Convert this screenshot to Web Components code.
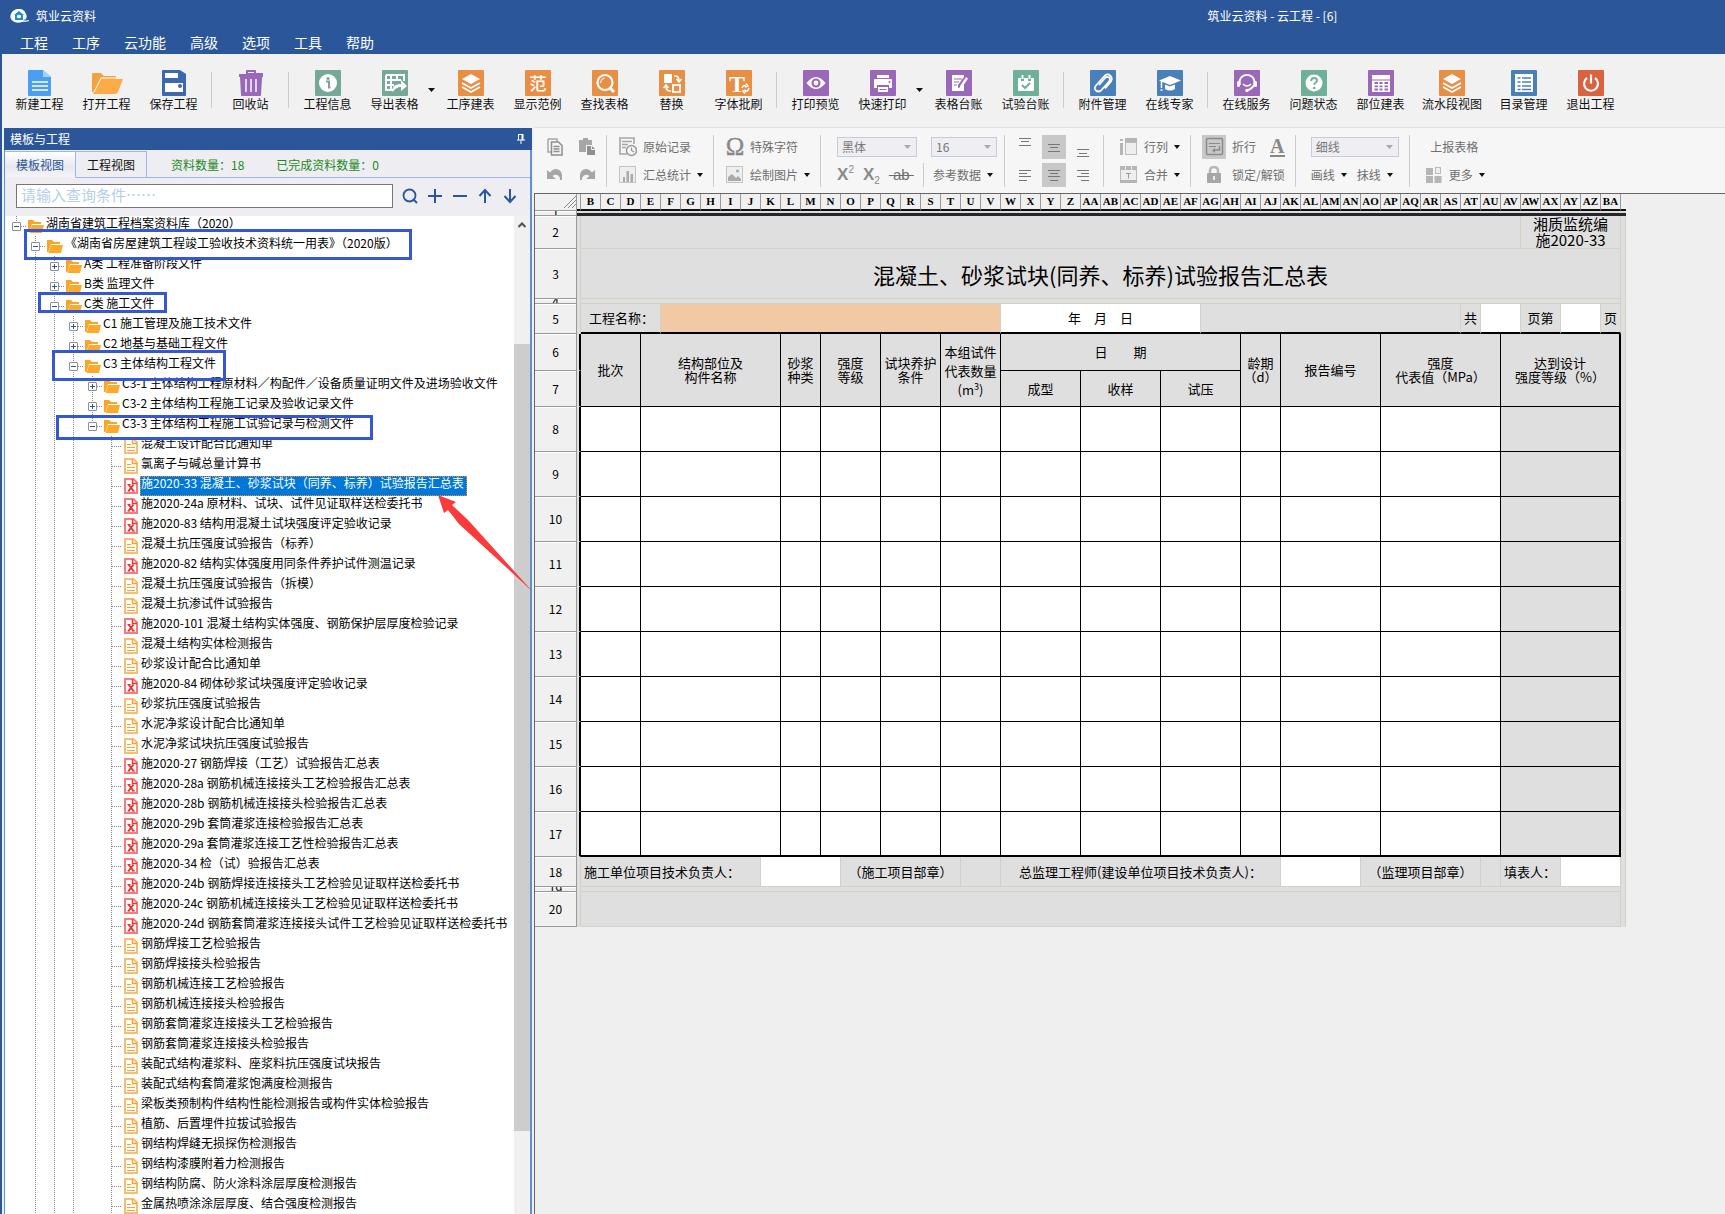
<!DOCTYPE html>
<html lang="zh-CN">
<head>
<meta charset="utf-8">
<title>筑业云资料</title>
<style>
  body {
    margin: 0;
    font-family: "Noto Sans CJK SC", sans-serif;
    font-size: 12px;
    line-height: 16px;
    color: #000;
    --blue: #2b579a;
  }
</style>
</head>
<body>
<app-window></app-window>

<script>
const define = (name, html, setup) => {
  const template = document.createElement("template");
  template.innerHTML = html;
  customElements.define(name, class extends HTMLElement {
    constructor() {
      super();
      this.attachShadow({ mode: "open" });
      this.shadowRoot.appendChild(template.content.cloneNode(true));
    }
    connectedCallback() {
      if (setup) setup(this, this.shadowRoot);
    }
  });
};

// ---------- icons ----------
const tile = (color, inner) => [26, 26, `<rect width="26" height="26" rx="1" fill="${color}"/>${inner}`];
const ORANGE = "#e78f45", GREEN = "#75a896", PURPLE = "#9a68b8", BLUE = "#4a80ba", TEAL = "#6fb198", GREY = "#a6a6a6";
const layers = `<path d="M13 4l9 5-9 5-9-5z" fill="#fff"/><path d="M4 13l9 5 9-5M4 17l9 5 9-5" fill="none" stroke="#fff" stroke-width="1.8"/>`;
const lines = (list) => `<path d="${list.map(([x, y, w]) => `M${x} ${y}h${w}`).join("")}" stroke="#777" shape-rendering="crispEdges"/>`;

const icons = {
  logo: [20, 16, `<path d="M9 1c4 0 6 2 7 5 1 2 1 4-1 6h4v1c-3 1-5 1-7 1-3 1-7 1-9-1C0 11 0 8 1 6c1-3 4-5 8-5z" fill="#fff"/><path d="M9 3l5 4h-1v5H5V7H4z" fill="#1b8fd0"/><rect x="7" y="7" width="4" height="3" rx="1" fill="#fff"/><path d="M14 11l5 2-6 .5z" fill="#6db7e6"/>`],
  file: [26, 26, `<path d="M1 1q0-1 1-1h14l8 7v18q0 1-1 1H2q-1 0-1-1z" fill="#4a9ff0"/><path d="M16 0v7h8z" fill="#a5d2fb"/><path d="M5 12h16M5 16h16M5 20h16" stroke="#fff" stroke-width="1.6"/>`],
  folder: [32, 26, `<path d="M1 22V4q0-1 1-1h8l3 3h11q1 0 1 1v2H10L3 22z" fill="#f3a23f"/><path d="M10 9h22l-5 13q-1 2-3 2H2z" fill="#fcab47"/><path d="M25 8H10L3 22" fill="none" stroke="#fff" stroke-width="1"/>`],
  save: [26, 26, `<path d="M1 1q0-1 1-1h17l6 4v21q0 1-1 1H2q-1 0-1-1z" fill="#3c68ac"/><rect x="4" y="3" width="13" height="5" fill="#fff"/><rect x="4" y="13" width="18" height="9" fill="#fff"/><circle cx="19" cy="16" r="2" fill="#3c68ac"/>`],
  trash: [26, 26, `<path d="M8 3V1q0-1 1-1h8q1 0 1 1v2h7v4h-1v1l-1 17q0 1-1 1H4q-1 0-1-1L2 7H1V4h7zM10 3h6V2h-6z" fill="${PURPLE}"/><path d="M8 9v13M13 9v13M18 9v13" stroke="#f1f1f1" stroke-width="1.6"/>`],
  info: tile(GREEN, `<circle cx="13" cy="13" r="9" fill="#fff"/><circle cx="13" cy="8.500" r="1.500" fill="${GREEN}"/><path d="M11 11.500h3v6h1.500" fill="none" stroke="${GREEN}" stroke-width="2"/>`),
  export: tile(GREEN, `<path d="M4 5h18v6M4 5v15h8M4 10h15M4 15h8M9 5v15M15 5v6" fill="none" stroke="#fff" stroke-width="2"/><path d="M10 22c0-6 4-8 9-8v-4l6 6-6 5v-4c-4 0-6 2-9 5z" fill="#fff"/>`),
  layers: tile(ORANGE, layers),
  sample: tile(ORANGE, `<text x="13" y="19.500" font-size="17" font-weight="500" text-anchor="middle" fill="#fff" font-family="Noto Sans CJK SC">范</text>`),
  find: tile(ORANGE, `<circle cx="13" cy="12.500" r="7.500" fill="none" stroke="#fff" stroke-width="2.200"/><path d="M18 18l4 4" stroke="#fff" stroke-width="3"/><path d="M8.500 13q0-4 4-5" fill="none" stroke="#fff"/>`),
  replace: tile(ORANGE, `<rect x="5" y="4" width="8" height="9" fill="#fff"/><rect x="14" y="15" width="7" height="7" fill="none" stroke="#fff" stroke-width="1.800"/><path d="M15 6h1q4 0 4 5M17.500 9l2.500 3 2.500-3M12 21h-1q-4 0-4-5M4.500 18L7 15l2.500 3" fill="none" stroke="#fff" stroke-width="1.600"/>`),
  font: tile(ORANGE, `<text x="11" y="22" font-size="24" font-weight="bold" text-anchor="middle" fill="#fff" font-family="Liberation Serif">T</text><path d="M16 18q1-3 4-2.500M20 13.500l2 2.500-3 1M23 18q-1 4-4 3.500M19 23.500L17 21l3-1" fill="none" stroke="#fff" stroke-width="1.400"/>`),
  eye: tile(PURPLE, `<path d="M3.500 13Q13 1 22.500 13 13 25 3.500 13z" fill="#fff"/><circle cx="13" cy="13" r="4.500" fill="${PURPLE}"/><circle cx="13" cy="13" r="2.400" fill="#fff"/>`),
  print: tile(PURPLE, `<rect x="7" y="5" width="12" height="3" fill="#fff"/><path d="M4 10q0-1 1-1h16q1 0 1 1v8h-3v-3H7v3H4z" fill="#fff"/><circle cx="19.500" cy="12" r="1" fill="${PURPLE}"/><path d="M8 17h10v5H8z" fill="#fff"/><path d="M9.500 19.500h7" stroke="${PURPLE}"/>`),
  ledger: tile(PURPLE, `<path d="M6 5h12v2l-6 8v3l3-1 3-4v8H6z" fill="#fff"/><path d="M8 9h8M8 12h5M8 15h3" stroke="${PURPLE}" stroke-width="1.200"/><path d="M14 16l6-9 2 1.500-6 9-2 1z" fill="#fff"/>`),
  trial: tile(TEAL, `<path d="M5 8h3v3h3V8h4v3h3V8h3v12q0 1-1 1H6q-1 0-1-1z" fill="#fff"/><path d="M9.500 5v4M16.500 5v4" stroke="#fff" stroke-width="2"/><path d="M9 15l3 3 5-5" fill="none" stroke="${TEAL}" stroke-width="2"/>`),
  clip: tile(BLUE, `<path d="M9 15l6-7q2-2 4-.5t0 4l-8 9q-2.500 2-5 0t0-5l8-9q3-3.500 6-1t1 6l-6 7" fill="none" stroke="#fff" stroke-width="1.700"/>`),
  expert: tile(BLUE, `<path d="M13 6l11 4.500L13 15 2 10.500z" fill="#fff"/><path d="M8 14.500l5 2 5-2V19q-5 3-10 0z" fill="#fff"/><path d="M4.500 11v7M3.500 20h2" stroke="#fff" stroke-width="1.500"/>`),
  service: tile(PURPLE, `<path d="M6 15a7.500 7.500 0 1 1 14 0q-2 4-6 5" fill="none" stroke="#fff" stroke-width="1.800"/><rect x="3" y="11" width="3" height="6" rx="1.500" fill="#fff"/><rect x="20" y="11" width="3" height="6" rx="1.500" fill="#fff"/><path d="M9 14q4 4 8 0" fill="none" stroke="#fff" stroke-width="1.600"/><circle cx="13" cy="20.500" r="1.700" fill="#fff"/>`),
  question: tile(TEAL, `<circle cx="13" cy="13" r="8.500" fill="#fff"/><path d="M10.200 11q0-3 3-3t2.800 2.600q0 1.400-1.600 2.200-1.200.6-1.200 2" fill="none" stroke="${TEAL}" stroke-width="2"/><circle cx="13.200" cy="18" r="1.300" fill="${TEAL}"/>`),
  grid: tile(PURPLE, `<rect x="4" y="5" width="18" height="17" fill="#fff"/><path d="M4 10h18" stroke="${PURPLE}"/><path d="M6.500 13h3.500M11.500 13h3M16.500 13h3.500M6.500 16.300h3.500M11.500 16.300h3M16.500 16.300h3.500M6.500 19.500h3.500M11.500 19.500h3M16.500 19.500h3.500" stroke="${PURPLE}" stroke-width="1.800"/>`),
  catalog: tile(BLUE, `<rect x="4" y="4" width="18" height="18" fill="#fff"/><path d="M6.500 8h3M6.500 12h3M6.500 16h3M11 8h9M11 12h9M11 16h9M11 19.500h9M6.500 19.500h3" stroke="${BLUE}" stroke-width="1.600"/>`),
  power: tile("#d96240", `<path d="M9 8a7 7 0 1 0 8 0" fill="none" stroke="#fff" stroke-width="2.200"/><path d="M13 4.500v9" stroke="#fff" stroke-width="2.200"/>`),
  caret: [7, 16, `<path d="M0 6h7L3.500 10z" fill="#111"/>`],
  caretgrey: [8, 16, `<path d="M0 6h7L3.500 10z" fill="#aaa"/>`],
  pin: [10, 12, `<path d="M2.500 1v6M1 7h8M5 7v4" stroke="#fff" fill="none"/><path d="M3 1.500h4" stroke="#fff"/><path d="M6.500 1v6" stroke="#fff" stroke-width="2"/>`],
  search: [16, 16, `<circle cx="7.500" cy="7.500" r="6" fill="none" stroke="#2b579a" stroke-width="1.800"/><path d="M11 11l4 4" stroke="#2b579a" stroke-width="2"/>`],
  plus: [16, 16, `<path d="M1 8h14M8 1v14" stroke="#2b579a" stroke-width="2"/>`],
  minus: [16, 16, `<path d="M1 8h14" stroke="#2b579a" stroke-width="2"/>`],
  up: [16, 16, `<path d="M8 2v13M2.500 8L8 2l5.500 6" fill="none" stroke="#2b579a" stroke-width="2"/>`],
  down: [16, 16, `<path d="M8 1v13M2.500 8L8 14l5.500-6" fill="none" stroke="#2b579a" stroke-width="2"/>`],
  scrollup: [16, 17, `<path d="M4.500 11L8 7.500l3.500 3.500" fill="none" stroke="#505050" stroke-width="2"/>`],
  dir: [16, 14, `<path d="M0 13V1h5l2 2h6v2H4L1.500 13z" fill="#fba426"/><path d="M4 5.500h11.500" stroke="#fff"/><path d="M4 6h12l-2 8H1.500z" fill="#ffa928"/>`],
  doc: [14, 16, `<path d="M1 1h8.500L13 4.500V15H1z" fill="#fff" stroke="#f6bd73" stroke-width="2"/><path d="M8.500 1v4.500H13" fill="none" stroke="#f9a52b" stroke-width="1.500"/><path d="M3 6.500h4M3 9.500h8M3 12.500h8" stroke="#f9a52b"/>`],
  xdoc: [14, 16, `<path d="M1 1h8.500L13 4.500V15H1z" fill="#fff" stroke="#f47c7c" stroke-width="2"/><path d="M8.500 1v4.500H13" fill="none" stroke="#ee3838" stroke-width="1.500"/><path d="M4.500 6.500l5 6.500M9.500 6.500l-5 6.500" stroke="#ee2a2a" stroke-width="1.800"/><path d="M3.500 6.500h3M8 13h3M3.500 13h2.500" stroke="#ee2a2a"/>`],
  copy: [18, 18, `<path d="M2 1h9v3M2 1v13h3" fill="none" stroke="${GREY}" stroke-width="1.500"/><path d="M5.500 4h7l3.500 3.500V17H5.500z" fill="#f6f6f6" stroke="#8f8f8f" stroke-width="1.500"/><path d="M7.500 8.500h6M7.500 11h6M7.500 13.500h6" stroke="#8f8f8f" stroke-width="1.300"/>`],
  paste: [18, 18, `<path d="M1 2h4V0h5v2h4v5H8v7H1z" fill="${GREY}"/><path d="M9 8h5l3 3v6H9z" fill="#8f8f8f"/><path d="M13.500 8v3.500H17" fill="none" stroke="#eee"/>`],
  undo: [18, 18, `<path d="M1 4v9h9l-3.500-3q4-3 7 1 .5 1 .5 3h2Q17 3 10 3 6.500 3 4 6.500z" fill="${GREY}"/>`],
  redo: [18, 18, `<path d="M17 4v9H8l3.500-3q-4-3-7 1-.5 1-.5 3H2Q1 3 8 3q3.500 0 6 3.500z" fill="${GREY}"/>`],
  record: [18, 20, `<path d="M8 17H1V1h14v6" fill="none" stroke="${GREY}" stroke-width="1.600"/><path d="M3 4.500h10M3 7.500h6M3 10.500h4" stroke="${GREY}" stroke-width="1.300"/><circle cx="12.500" cy="13.500" r="5" fill="#f6f6f6" stroke="#999" stroke-width="1.500"/><path d="M12.500 10.500v3l2.500 1.500" fill="none" stroke="#999" stroke-width="1.300"/>`],
  chart: [18, 18, `<rect x=".5" y=".5" width="16" height="16" fill="#eee" stroke="#c4c4c4"/><path d="M4 16v-5h2v5M7.500 16V5h2.500v11M11.500 16V8H14v8" fill="#aaa"/>`],
  omega: [18, 22, `<text x="9" y="19" font-size="25" text-anchor="middle" fill="#888" stroke="#888" stroke-width=".4" font-family="Liberation Serif">Ω</text>`],
  picture: [18, 18, `<rect x=".5" y=".5" width="16" height="16" fill="#eee" stroke="#c4c4c4"/><path d="M2 15v-4l4-3 4 4 2-2 3 3v2z" fill="#aaa"/><circle cx="11.500" cy="5" r="1.600" fill="#aaa"/>`],
  vtop: [24, 24, lines([[6, 3.5, 12], [8, 6.5, 8], [6, 10.5, 12]])],
  vmid: [24, 24, lines([[6, 9.5, 12], [8, 12.5, 8], [6, 16.5, 12]])],
  vbot: [24, 24, lines([[6, 14.5, 12], [8, 18.5, 8], [6, 21.5, 12]])],
  left: [24, 24, lines([[6, 7.5, 12], [6, 10.5, 8], [6, 13.5, 12], [6, 17.5, 8]])],
  center: [24, 24, lines([[6, 7.5, 12], [8, 10.5, 8], [6, 13.5, 12], [8, 17.5, 8]])],
  right: [24, 24, lines([[6, 7.5, 12], [10, 10.5, 8], [6, 13.5, 12], [10, 17.5, 8]])],
  rowcol: [18, 18, `<rect x="5.500" y="4.500" width="11" height="12" fill="#eee" stroke="#bbb"/><path d="M0 1h3v2H0zM5 0h12v4H5zM0 5h3v12H0z" fill="#b5b5b5"/>`],
  merge: [18, 18, `<rect x=".5" y=".5" width="16" height="16" fill="#eee" stroke="#bbb"/><path d="M0 0h17v4H0zM0 14h17v3H0z" fill="#b5b5b5"/><path d="M5.500 0v4M11.500 0v4" stroke="#eee"/><path d="M6 7.500h5M8.500 7.500v5" stroke="#999"/>`],
  wrap: [24, 24, `<rect x="4.500" y="3.500" width="16" height="16" rx="1" fill="none" stroke="#8a8a8a" stroke-width="1.500"/><path d="M7 8.500h11M7 11.500h7" stroke="#8a8a8a"/><path d="M17.500 11v4h-5" fill="none" stroke="#8a8a8a" stroke-width="1.500"/><path d="M10 15.500l3-2.500v5z" fill="#8a8a8a"/>`],
  lock: [24, 18, `<path d="M8 8V5q0-4 4-4t4 4v3" fill="none" stroke="#b8b8b8" stroke-width="2.500"/><rect x="5" y="7" width="14" height="10" rx="1" fill="${GREY}"/><path d="M12 10v4" stroke="#eee" stroke-width="2"/>`],
  more: [18, 18, `<path d="M1 2h7v7H1zM1 10h7v7H1zM9.500 10h7v7h-7z" fill="#b5b5b5"/><rect x="10.500" y="1.500" width="5" height="6" fill="#eee" stroke="#bbb"/>`],
};

define("ui-icon", `<style>:host { display: inline-flex; flex: none; } svg { display: block; }</style>`, (el, root) => {
  const [w, h, inner] = icons[el.getAttribute("name")];
  root.innerHTML += `<svg width="${w}" height="${h}" viewBox="0 0 ${w} ${h}" aria-hidden="true">${inner}</svg>`;
});

// ---------- title and menu ----------
define("title-bar", `
<style>
  :host { display: block; background: var(--blue); color: #fff; }
  .title { box-sizing: border-box; display: grid; grid-template-columns: 70% 1fr; height: 30px; padding-top: 2px; align-items: center; }
  .brand { display: flex; align-items: center; gap: 6px; padding-left: 10px; }
  nav { display: flex; gap: 24px; padding-left: 20px; height: 24px; }
  button { all: unset; font-size: 14px; line-height: 20px; cursor: default; }
</style>
<div class="title"><div class="brand"><ui-icon name="logo"></ui-icon><span>筑业云资料</span></div><span>筑业云资料 - 云工程 - [6]</span></div>
<nav>
  <button>工程</button><button>工序</button><button>云功能</button><button>高级</button><button>选项</button><button>工具</button><button>帮助</button>
</nav>`);

// ---------- main toolbar ----------
define("tool-button", `
<style>
  :host { display: block; flex: none; width: 67px; }
  :host([wide]) { width: 76px; }
  button { all: unset; box-sizing: border-box; width: 100%; display: flex; flex-direction: column; align-items: center; white-space: nowrap; color: #111; }
  button:hover { background: #dfe8f5; }
</style>
<button><slot name="icon"></slot><span><slot></slot></span></button>`);

define("main-toolbar", `
<style>
  :host { display: flex; align-items: flex-start; padding: 16px 0 15px 4px; background: #f1f1f1; }
  hr { flex: none; width: 1px; height: 36px; margin: 2px 5px 0 4px; border: 0; background: #ccc; }
  .drop { all: unset; width: 9px; flex: none; padding-top: 12px; }
</style>`, (el, root) => {
  const items = ["file 新建工程", "folder 打开工程", "save 保存工程", "|", "trash 回收站", "|", "info 工程信息", "export 导出表格", "v",
    "layers 工序建表", "sample 显示范例", "find 查找表格", "replace 替换", "font 字体批刷", "|", "eye 打印预览", "print 快速打印", "v",
    "ledger 表格台账", "trial 试验台账", "|", "clip 附件管理", "expert 在线专家", "|", "service 在线服务", "question 问题状态",
    "grid 部位建表", "layers 流水段视图", "catalog 目录管理", "power 退出工程"];
  root.innerHTML += items.map((item) => {
    if (item === "|") return "<hr>";
    if (item === "v") return `<button class="drop" aria-label="更多"><ui-icon name="caret"></ui-icon></button>`;
    const [icon, label] = item.split(" ");
    return `<tool-button${label.length > 4 ? " wide" : ""}><ui-icon slot="icon" name="${icon}"></ui-icon>${label}</tool-button>`;
  }).join("");
});

// ---------- tree ----------
define("tree-row", `
<style>
  :host { display: flex; height: 20px; padding-left: 2px; white-space: nowrap; }
  .cells { display: flex; flex: none; }
  i { flex: none; width: 19px; height: 20px; }
  .guide { background: repeating-linear-gradient(#888 0 1px, transparent 1px 2px) 9px 0 / 1px 100% no-repeat; }
  .node { display: grid; place-items: center; background:
      repeating-linear-gradient(#888 0 1px, transparent 1px 2px) 9px 0 / 1px 100% no-repeat,
      repeating-linear-gradient(90deg, #888 0 1px, transparent 1px 2px) 10px 10px / 10px 1px no-repeat; }
  .last { background-size: 1px 10px, 10px 1px; }
  button { box-sizing: border-box; width: 9px; height: 9px; padding: 0; border: 1px solid #8f8f8f; border-radius: 1px;
    background: linear-gradient(var(--blue), var(--blue)) center / 5px 1px no-repeat, #fff; }
  button.closed { background: linear-gradient(var(--blue), var(--blue)) center / 5px 1px no-repeat,
    linear-gradient(var(--blue), var(--blue)) center / 1px 5px no-repeat, #fff; }
  .icon { flex: none; width: 19px; display: grid; place-items: center; }
  .label { line-height: 14px; padding: 0 3px 0 1px; }
  :host([selected]) .label { background: #0078d7; color: #fff; outline: 1px dotted #f08a30; outline-offset: -1px; }
</style>
<span class="cells"></span><span class="label"><slot></slot></span>`, (el, root) => {
  const level = +el.getAttribute("level");
  const type = el.getAttribute("type");
  let cells = "";
  for (let i = 0; i < level; i++) {
    cells += `<i class="${i === 0 || i === 4 ? "" : "guide"}"></i>`;
  }
  const leaf = type === "doc" || type === "xdoc";
  const button = leaf ? "" : `<button class="${type}" aria-label="展开或折叠"></button>`;
  cells += `<i class="node${level === 0 || el.hasAttribute("last") ? " last" : ""}">${button}</i>`;
  cells += `<span class="icon"><ui-icon name="${leaf ? type : "dir"}"></ui-icon></span>`;
  root.querySelector(".cells").innerHTML = cells;
});

define("doc-tree", `
<style>:host { display: block; overflow: hidden; background: #fff; }</style>`, (el, root) => {
  const folders = [
    [0, "open", "湖南省建筑工程档案资料库（2020）"],
    [1, "open", "《湖南省房屋建筑工程竣工验收技术资料统一用表》（2020版）"],
    [2, "closed", "A类 工程准备阶段文件"],
    [2, "closed", "B类 监理文件"],
    [2, "open", "C类 施工文件"],
    [3, "closed", "C1 施工管理及施工技术文件"],
    [3, "closed", "C2 地基与基础工程文件"],
    [3, "open", "C3 主体结构工程文件"],
    [4, "closed", "C3-1 主体结构工程原材料／构配件／设备质量证明文件及进场验收文件"],
    [4, "closed", "C3-2 主体结构工程施工记录及验收记录文件"],
    [4, "open", "C3-3 主体结构工程施工试验记录与检测文件", "last"],
  ];
  const docs = `混凝土设计配合比通知单
氯离子与碱总量计算书
施2020-33 混凝土、砂浆试块（同养、标养）试验报告汇总表
施2020-24a 原材料、试块、试件见证取样送检委托书
施2020-83 结构用混凝土试块强度评定验收记录
混凝土抗压强度试验报告（标养）
施2020-82 结构实体强度用同条件养护试件测温记录
混凝土抗压强度试验报告（拆模）
混凝土抗渗试件试验报告
施2020-101 混凝土结构实体强度、钢筋保护层厚度检验记录
混凝土结构实体检测报告
砂浆设计配合比通知单
施2020-84 砌体砂浆试块强度评定验收记录
砂浆抗压强度试验报告
水泥净浆设计配合比通知单
水泥净浆试块抗压强度试验报告
施2020-27 钢筋焊接（工艺）试验报告汇总表
施2020-28a 钢筋机械连接接头工艺检验报告汇总表
施2020-28b 钢筋机械连接接头检验报告汇总表
施2020-29b 套筒灌浆连接检验报告汇总表
施2020-29a 套筒灌浆连接工艺性检验报告汇总表
施2020-34 检（试）验报告汇总表
施2020-24b 钢筋焊接连接接头工艺检验见证取样送检委托书
施2020-24c 钢筋机械连接接头工艺检验见证取样送检委托书
施2020-24d 钢筋套筒灌浆连接接头试件工艺检验见证取样送检委托书
钢筋焊接工艺检验报告
钢筋焊接接头检验报告
钢筋机械连接工艺检验报告
钢筋机械连接接头检验报告
钢筋套筒灌浆连接接头工艺检验报告
钢筋套筒灌浆连接接头检验报告
装配式结构灌浆料、座浆料抗压强度试块报告
装配式结构套筒灌浆饱满度检测报告
梁板类预制构件结构性能检测报告或构件实体检验报告
植筋、后置埋件拉拔试验报告
钢结构焊缝无损探伤检测报告
钢结构漆膜附着力检测报告
钢结构防腐、防火涂料涂层厚度检测报告
金属热喷涂涂层厚度、结合强度检测报告`.split("\n");
  const row = (level, type, text, extra = "") => `<tree-row role="treeitem" level="${level}" type="${type}" ${extra}>${text}</tree-row>`;
  root.innerHTML += folders.map((f) => row(...f)).join("")
    + docs.map((text, i) => row(5, text.startsWith("施2020") ? "xdoc" : "doc", text, i === 2 ? "selected" : "")).join("");
});

define("side-panel", `
<style>
  :host { display: flex; flex-direction: column; flex: none; width: 528px; margin: 1px 2px 0; }
  header { display: flex; justify-content: space-between; align-items: center; height: 22px; padding: 0 6px; background: var(--blue); color: #fff; }
  .frame { flex: 1; min-height: 0; display: flex; flex-direction: column; border: solid #5e8fdd; border-width: 0 2px 0 1px; background: #eeedf2; }
  .tabs { display: flex; height: 28px; box-sizing: border-box; border-bottom: 1px solid #9ab9e6; padding-top: 1px; color: #1a8a1a; }
  .tabs button { all: unset; box-sizing: border-box; width: 71px; height: 27px; text-align: center; border: solid #9ab9e6; border-width: 1px 1px 1px 0; color: #111; }
  .tabs button.on { color: var(--blue); border-bottom-color: #eeedf2; background: linear-gradient(#fff, #e8e8ef 60%, #f4f4f8); }
  .tabs span { line-height: 27px; margin-left: 24px; }
  .tabs span + span { margin-left: 32px; }
  .search { display: flex; align-items: center; gap: 9px; padding: 6px 12px 8px 11px; }
  input { flex: 1; min-width: 0; box-sizing: border-box; height: 24px; border: 1px solid #777; padding: 0 4px 3px; font: 15px "Noto Sans CJK SC"; background: #fff; }
  input::placeholder { color: #b5cfe9; opacity: 1; }
  .search button { all: unset; display: flex; }
  .body { flex: 1; min-height: 0; display: flex; }
  doc-tree { flex: 1; min-width: 0; }
  .bar { flex: none; width: 16px; display: flex; flex-direction: column; background: #f0f0f0; }
  .thumb { flex: 787; background: #cdcdcd; }
  .before { flex: 111; }
  .after { flex: 83; }
</style>
<header><span>模板与工程</span><ui-icon name="pin"></ui-icon></header>
<div class="frame">
  <div class="tabs"><button class="on">模板视图</button><button>工程视图</button><span>资料数量：18</span><span>已完成资料数量：0</span></div>
  <div class="search">
    <input type="text" placeholder="请输入查询条件……" aria-label="查询条件">
    <button aria-label="查询"><ui-icon name="search"></ui-icon></button>
    <button aria-label="展开"><ui-icon name="plus"></ui-icon></button>
    <button aria-label="折叠"><ui-icon name="minus"></ui-icon></button>
    <button aria-label="上一个"><ui-icon name="up"></ui-icon></button>
    <button aria-label="下一个"><ui-icon name="down"></ui-icon></button>
  </div>
  <div class="body">
    <doc-tree role="tree"></doc-tree>
    <div class="bar"><ui-icon name="scrollup"></ui-icon><div class="before"></div><div class="thumb"></div><div class="after"></div></div>
  </div>
</div>`);

// ---------- format ribbon ----------
define("ribbon-button", `
<style>
  :host { display: block; flex: none; }
  button { all: unset; display: flex; align-items: center; gap: 6px; height: 24px; white-space: nowrap; color: #6e6e6e; }
  :host([on]) button { background: #c8c8c8; }
  :host([drop]) button::after { content: ""; border: solid transparent; border-width: 4px 3px 0; border-top-color: #111; }
</style>
<button><slot name="icon"></slot><slot></slot></button>`);

define("ribbon-select", `
<style>
  :host { display: grid; height: 20px; align-items: center; box-sizing: border-box; border: 1px solid #c9c9df; background: #eeeef3; }
  select { grid-area: 1 / 1; appearance: none; border: 0; background: none; width: 100%; height: 18px; padding: 0 0 0 4px; font: 12px/18px "Noto Sans CJK SC"; color: #777; }
  ui-icon { grid-area: 1 / 1; justify-self: end; margin-right: 4px; pointer-events: none; }
</style>
<select></select><ui-icon name="caretgrey"></ui-icon>`, (el, root) => {
  const select = root.querySelector("select");
  select.setAttribute("aria-label", el.getAttribute("label"));
  select.innerHTML = `<option>${el.getAttribute("value")}</option>`;
});

define("ribbon-group", `
<style>
  :host { display: flex; flex-direction: column; flex: none; gap: 4px; padding: 0 10px 0 12px; border-right: 1px solid #ccc; }
  div { display: flex; align-items: center; height: 24px; gap: var(--gap, 6px); }
</style>
<div><slot name="top"></slot></div><div><slot></slot></div>`);

define("format-ribbon", `
<style>
  :host { display: flex; padding: 7px 0 6px; border-top: 1px solid #e0e0ea; background: #f6f6f6; }
  .edit { --gap: 14px; }
  .type { --gap: 9px; padding: 0 7px 0 16px; }
  .type ribbon-select { width: 80px; }
  .type ribbon-select + ribbon-select { width: 66px; margin-left: 5px; }
  .align { --gap: 5px; padding: 0 8px; }
  .cells { padding-left: 16px; }
  .wrap { --gap: 14px; padding-left: 11px; }
  .line { --gap: 10px; padding-left: 15px; }
  .line ribbon-select { width: 88px; }
  .report { padding-left: 15px; border: 0; }
  .mark { font: bold 17px/22px "Liberation Sans"; color: #8a8a8a; white-space: nowrap; }
  .mark sup, .mark sub { font-size: 10px; line-height: 0; font-weight: normal; }
  .strike { font: 15px/22px "Liberation Sans"; text-decoration: line-through; }
  .under { font: bold 20px/17px "Liberation Serif"; border-bottom: 2px solid #888; color: #888; }
  hr { width: 1px; height: 24px; margin: 0; border: 0; background: #ccc; }
</style>
<ribbon-group class="edit">
  <ribbon-button slot="top" aria-label="复制"><ui-icon slot="icon" name="copy"></ui-icon></ribbon-button>
  <ribbon-button slot="top" aria-label="粘贴"><ui-icon slot="icon" name="paste"></ui-icon></ribbon-button>
  <ribbon-button aria-label="撤销"><ui-icon slot="icon" name="undo"></ui-icon></ribbon-button>
  <ribbon-button aria-label="重做"><ui-icon slot="icon" name="redo"></ui-icon></ribbon-button>
</ribbon-group>
<ribbon-group>
  <ribbon-button slot="top"><ui-icon slot="icon" name="record"></ui-icon>原始记录</ribbon-button>
  <ribbon-button drop><ui-icon slot="icon" name="chart"></ui-icon>汇总统计</ribbon-button>
</ribbon-group>
<ribbon-group>
  <ribbon-button slot="top"><ui-icon slot="icon" name="omega"></ui-icon>特殊字符</ribbon-button>
  <ribbon-button drop><ui-icon slot="icon" name="picture"></ui-icon>绘制图片</ribbon-button>
</ribbon-group>
<ribbon-group class="type">
  <ribbon-select slot="top" label="字体" value="黑体"></ribbon-select>
  <ribbon-select slot="top" label="字号" value="16"></ribbon-select>
  <ribbon-button><span class="mark">X<sup>2</sup></span></ribbon-button>
  <ribbon-button><span class="mark">X<sub>2</sub></span></ribbon-button>
  <ribbon-button><span class="strike">&nbsp;ab&nbsp;</span></ribbon-button>
  <hr>
  <ribbon-button drop>参考数据</ribbon-button>
</ribbon-group>
<ribbon-group class="align">
  <ribbon-button slot="top" aria-label="顶端对齐"><ui-icon slot="icon" name="vtop"></ui-icon></ribbon-button>
  <ribbon-button slot="top" on aria-label="垂直居中"><ui-icon slot="icon" name="vmid"></ui-icon></ribbon-button>
  <ribbon-button slot="top" aria-label="底端对齐"><ui-icon slot="icon" name="vbot"></ui-icon></ribbon-button>
  <ribbon-button aria-label="左对齐"><ui-icon slot="icon" name="left"></ui-icon></ribbon-button>
  <ribbon-button on aria-label="居中"><ui-icon slot="icon" name="center"></ui-icon></ribbon-button>
  <ribbon-button aria-label="右对齐"><ui-icon slot="icon" name="right"></ui-icon></ribbon-button>
</ribbon-group>
<ribbon-group class="cells">
  <ribbon-button slot="top" drop><ui-icon slot="icon" name="rowcol"></ui-icon>行列</ribbon-button>
  <ribbon-button drop><ui-icon slot="icon" name="merge"></ui-icon>合并</ribbon-button>
</ribbon-group>
<ribbon-group class="wrap">
  <ribbon-button slot="top"><ui-icon slot="icon" name="wrap" style="background:#c8c8c8"></ui-icon>折行</ribbon-button>
  <ribbon-button slot="top"><span class="under">A</span></ribbon-button>
  <ribbon-button><ui-icon slot="icon" name="lock"></ui-icon>锁定/解锁</ribbon-button>
</ribbon-group>
<ribbon-group class="line">
  <ribbon-select slot="top" label="线型" value="细线"></ribbon-select>
  <ribbon-button drop>画线</ribbon-button>
  <ribbon-button drop>抹线</ribbon-button>
</ribbon-group>
<ribbon-group class="report">
  <ribbon-button slot="top">&nbsp;&nbsp;上报表格</ribbon-button>
  <ribbon-button drop><ui-icon slot="icon" name="more"></ui-icon>更多</ribbon-button>
</ribbon-group>`);

// ---------- spreadsheet ----------
define("sheet-view", `
<style>
  :host { display: block; flex: 1; min-height: 0; overflow: hidden; background: #efefef; border: solid #666; border-width: 1px 0 0 1px; }
  table { table-layout: fixed; width: 1091px; border-collapse: separate; border-spacing: 0; font-size: 13px; line-height: 14px; }
  th, td { box-sizing: border-box; padding: 0; text-align: center; vertical-align: middle; overflow: hidden;
    border: solid #d4d0c8; border-width: 0 1px 1px 0; font-weight: normal; white-space: nowrap; }
  td { background: #dfdfdf; }
  th { background: #f0f0f0; border-color: #999; font-size: 12px; }
  tbody th { box-shadow: inset 0 1px #fff; }
  thead th { font: bold 11px/15px "Liberation Serif"; height: 17px; border-bottom: 2px solid #111; box-shadow: none; }
  thead th:first-child { border-bottom: 1px solid #999; }
  thead th:last-child { border-right: 0; }
  thead th:first-child svg { display: block; margin-left: auto; }
  .thin { height: 4px; line-height: 4px; overflow: hidden; font-size: 12px; }
  .rule { border-bottom: 3px solid #25252b; background: #dcdcdc; border-right: 0; }
  .edge { border-bottom-color: transparent; }
  .w { background: #fff; }
  .p { background: #f1c9a5; }
  .l { text-align: left; padding-left: 3px; }
  .name { padding-left: 8px; }
  .code { font-size: 15px; line-height: 16px; }
  .h1 { font-size: 22px; line-height: 28px; }
  .k { border-color: #000; }
  .tall { line-height: 19px; }
  .tall sup { font-size: 9px; line-height: 0; }
  .top { border-bottom: 2px solid #000; }
  .kr { border-right: 2px solid #000; }
  .kl { border-right: 2px solid #000; border-bottom-color: transparent; }
</style>
<table>
  <colgroup></colgroup>
  <thead></thead>
  <tbody></tbody>
</table>`, (el, root) => {
  const names = [];
  for (let n = 1; n < 53; n++) {
    names.push((n > 25 ? String.fromCharCode(64 + Math.floor(n / 26)) : "") + String.fromCharCode(65 + n % 26));
  }
  root.querySelector("colgroup").innerHTML = `<col style="width:42px"><col style="width:4px">${`<col style="width:20px">`.repeat(52)}<col style="width:5px">`;
  root.querySelector("thead").innerHTML = `<tr><th><svg width="12" height="14"><path d="M0 13L12 1M4 13l8-8M8 13l4-4" stroke="#888"/></svg></th><th></th>${names.map((n) => `<th>${n}</th>`).join("")}<th></th></tr>`;

  const td = (span, text = "", cls = "", rows = 1) => `<td colspan="${span}" rowspan="${rows}" class="${cls}">${text}</td>`;
  const row = (n, height, cells, left = "edge") =>
    `<tr style="height:${height}px"><th>${height < 10 ? `<div class="thin">${n}</div>` : n}</th><td class="${left}"></td>${cells}<td class="edge"></td></tr>`;
  const groups = [3, 7, 2, 3, 3, 3, 4, 4, 4, 2, 5, 6, 6];

  let body = `<tr style="height:5px"><th><div class="thin">1</div></th><td class="rule"></td>${td(52, "", "rule")}<td class="rule"></td></tr>`;
  body += row(2, 33, td(47) + td(5, "湘质监统编<br>施2020-33", "code"));
  body += row(3, 50, td(52, "混凝土、砂浆试块(同养、标养)试验报告汇总表", "h1"));
  body += row(4, 5, td(52));
  body += row(5, 30, td(4, "工程名称：", "l name top") + td(17, "", "p top") + td(10, "年&emsp;月&emsp;日", "w top") + td(13, "", "top")
    + td(1, "共", "top") + td(2, "", "w top") + td(2, "页第", "top") + td(2, "", "w top") + td(1, "页", "top"));
  body += row(6, 37, td(3, "批次", "k", 2) + td(7, "结构部位及<br>构件名称", "k", 2) + td(2, "砂浆<br>种类", "k", 2) + td(3, "强度<br>等级", "k", 2)
    + td(3, "试块养护<br>条件", "k", 2) + td(3, "本组试件<br>代表数量<br>(m<sup>3</sup>)", "k tall", 2) + td(12, "日&emsp;&emsp;期", "k")
    + td(2, "龄期<br>（d）", "k", 2) + td(5, "报告编号", "k", 2) + td(6, "强度<br>代表值（MPa）", "k", 2) + td(6, "达到设计<br>强度等级（%）", "k kr", 2), "kl");
  body += row(7, 36, td(4, "成型", "k") + td(4, "收样", "k") + td(4, "试压", "k"), "kl");
  for (let n = 8; n < 18; n++) {
    const bottom = n === 17 ? " top" : "";
    body += row(n, 45, groups.map((g, i) => td(g, "", (i === 12 ? "k kr" : "k w") + bottom)).join(""), "kl");
  }
  body += row(18, 30, td(9, "施工单位项目技术负责人：", "l") + td(4, "", "w") + td(6, "（施工项目部章）") + td(2)
    + td(14, "总监理工程师(建设单位项目技术负责人)：") + td(4, "", "w") + td(6, "（监理项目部章）") + td(1) + td(3, "填表人：", "l") + td(3, "", "w"));
  body += row(19, 5, td(52));
  body += row(20, 35, td(52));
  root.querySelector("tbody").innerHTML = body;
});

// ---------- hand-drawn marks over the tree ----------
define("mark-layer", `
<style>
  :host { position: absolute; left: 0; top: 0; pointer-events: none; }
  svg { display: block; }
</style>
<svg width="540" height="600" aria-hidden="true">
  <g fill="none" stroke="#3557d3" stroke-width="3">
    <rect x="25.500" y="230.500" width="385" height="28"/>
    <rect x="39.500" y="293.500" width="126" height="18"/>
    <rect x="53.500" y="351.500" width="171" height="28"/>
    <rect x="57.500" y="416.500" width="314" height="22"/>
  </g>
  <path d="M438 495l18 7-4 3 16 15 65 72-74-68-11-14-4 3z" fill="#fb3b3b"/>
</svg>`);

define("app-window", `
<style>
  :host { display: flex; flex-direction: column; height: 100vh; overflow: hidden; position: relative; background: #f1f1f1; }
  .work { flex: 1; min-height: 0; display: flex; flex-direction: column; border-left: 2px solid var(--blue); }
  .panes { flex: 1; min-height: 0; display: flex; }
  .editor { flex: 1; min-width: 0; display: flex; flex-direction: column; }
</style>
<title-bar></title-bar>
<div class="work">
  <main-toolbar></main-toolbar>
  <div class="panes">
    <side-panel></side-panel>
    <div class="editor"><format-ribbon></format-ribbon><sheet-view></sheet-view></div>
  </div>
</div>
<mark-layer></mark-layer>`);
</script>
</body>
</html>
